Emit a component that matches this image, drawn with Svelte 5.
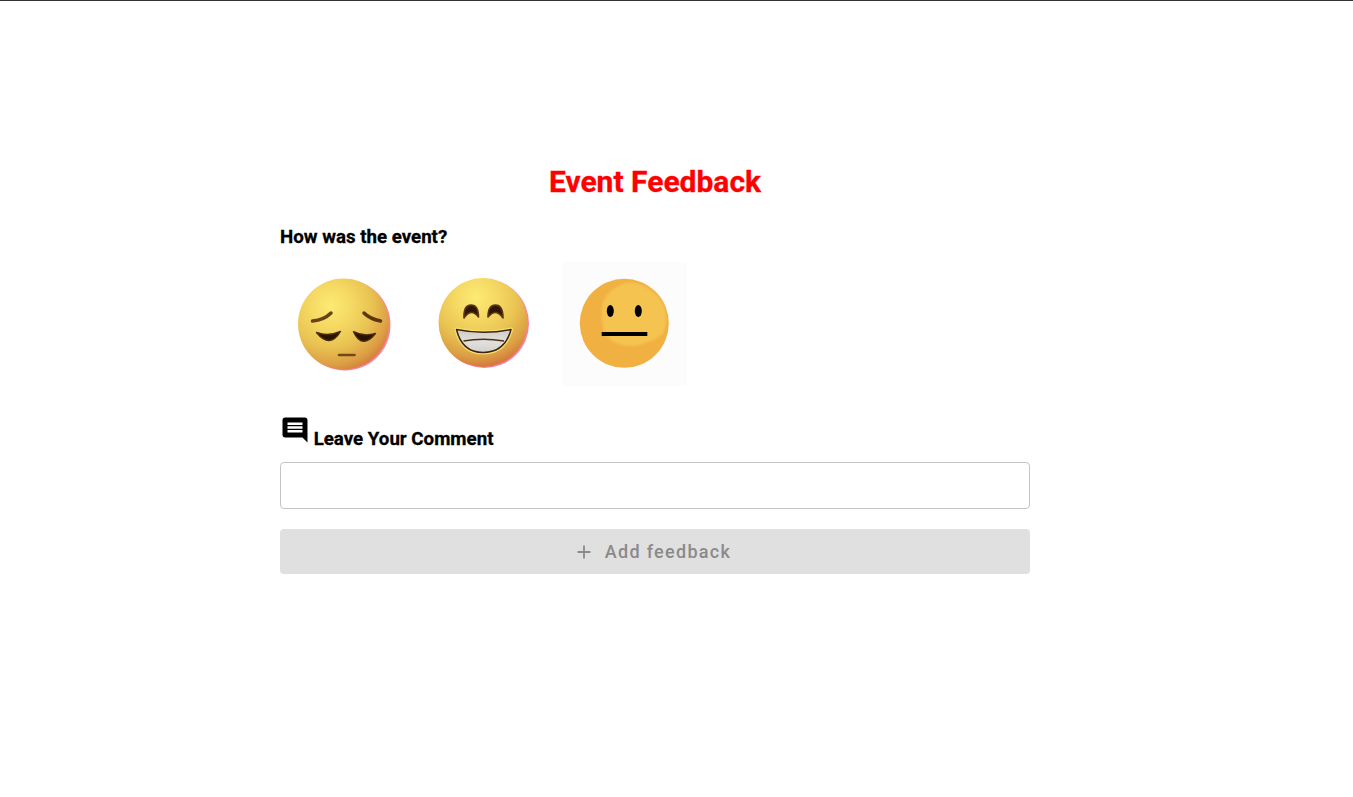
<script lang="ts">
    let comment = $state('');
</script>

<div class="topbar"></div>

<main class="page">
    <h1>Event Feedback</h1>

    <h3 class="question">How was the event?</h3>
    <div class="emojis">
        <button class="emoji" aria-label="Sad">
            <svg width="125" height="124" viewBox="0 0 125 124">
                <defs>
                    <radialGradient id="sadFace" cx="0.36" cy="0.3" r="0.76">
                        <stop offset="0" stop-color="#fceb74" />
                        <stop offset="0.3" stop-color="#f5d963" />
                        <stop offset="0.6" stop-color="#e9c352" />
                        <stop offset="0.85" stop-color="#dc9f44" />
                        <stop offset="1" stop-color="#d4793c" />
                    </radialGradient>
                </defs>
                <circle cx="65" cy="63" r="45.500" fill="#fb7fa0" />
                <circle cx="63.500" cy="62" r="45.500" fill="url(#sadFace)" />
                <path d="M32.500 59 Q44 58 51 51" fill="none" stroke="#6b4217" stroke-width="3.500" stroke-linecap="round" />
                <path d="M84 51 Q90 57 100.500 59" fill="none" stroke="#5c3612" stroke-width="3.500" stroke-linecap="round" />
                <path d="M36.500 70.500 Q48 75 60.500 69.500 Q50 87 36.500 70.500Z" fill="#2a1203" stroke="#4a2a0c" stroke-width="1.400" stroke-linejoin="round" />
                <path d="M73.500 69.700 Q84 75 95.500 71.500 Q82 88 73.500 69.700Z" fill="#2a1203" stroke="#4a2a0c" stroke-width="1.400" stroke-linejoin="round" />
                <path d="M59 93 H74.500" fill="none" stroke="#75481a" stroke-width="2.600" stroke-linecap="round" />
            </svg>
        </button>

        <button class="emoji" aria-label="Happy">
            <svg width="125" height="124" viewBox="0 0 125 124">
                <defs>
                    <radialGradient id="happyFace" cx="0.42" cy="0.22" r="0.78">
                        <stop offset="0" stop-color="#fceb74" />
                        <stop offset="0.3" stop-color="#f5d963" />
                        <stop offset="0.6" stop-color="#e9c352" />
                        <stop offset="0.85" stop-color="#dc9f44" />
                        <stop offset="1" stop-color="#d4793c" />
                    </radialGradient>
                    <linearGradient id="teeth" x1="0" y1="0" x2="0" y2="1">
                        <stop offset="0" stop-color="#cfccc6" />
                        <stop offset="0.5" stop-color="#e2e0dc" />
                        <stop offset="1" stop-color="#d4d2ce" />
                    </linearGradient>
                </defs>
                <circle cx="63.500" cy="61.500" r="44.500" fill="#fb7fa0" />
                <circle cx="62" cy="60.500" r="44.500" fill="url(#happyFace)" />
                <path d="M43 56 Q42.500 43 50 43 Q57.500 43 57.500 55 Q50 45.500 43 56Z" fill="#2f1604" stroke="#5a3512" stroke-width="1.600" stroke-linejoin="round" />
                <path d="M67 55 Q67 43 74.500 43 Q82 43 82 56 Q75 45.500 67 55Z" fill="#2f1604" stroke="#5a3512" stroke-width="1.600" stroke-linejoin="round" />
                <path d="M35.500 67.500 Q62 73 90 67.500 Q84 90.500 62 90.500 Q41 90.500 35.500 67.500Z" fill="url(#teeth)" stroke="#f8df6c" stroke-width="4" stroke-linejoin="round" />
                <path d="M35.500 67.500 Q62 73 90 67.500 Q84 90.500 62 90.500 Q41 90.500 35.500 67.500Z" fill="url(#teeth)" stroke="#3a2510" stroke-width="1.500" stroke-linejoin="round" />
                <path d="M42.500 79 Q62 75.500 83 79" fill="none" stroke="#4a3218" stroke-width="1.500" />
            </svg>
        </button>

        <button class="emoji neutral" aria-label="Neutral">
            <svg width="125" height="124" viewBox="0 0 125 124">
                <defs>
                    <filter id="soft" x="-10%" y="-10%" width="120%" height="120%">
                        <feGaussianBlur stdDeviation="1" />
                    </filter>
                </defs>
                <circle cx="62.300" cy="61.300" r="44.500" fill="#f1b042" />
                <path d="M40 58 Q38 36 50 28 Q60 20 70 20.500 Q92 24 102 44 Q107 58 101 72 Q88 82 70 84 Q50 84 42 70Z" fill="#f5c350" filter="url(#soft)" />
                <ellipse cx="48.300" cy="49" rx="3.500" ry="6" fill="#000" />
                <ellipse cx="76.300" cy="49" rx="3.500" ry="6" fill="#000" />
                <rect x="39.700" y="70" width="45.600" height="4" fill="#000" />
            </svg>
        </button>
    </div>

    <h3 class="comment-label">
        <svg width="30" height="30" viewBox="0 0 24 24" aria-hidden="true">
            <path d="M21.990 4c0-1.100-.890-2-1.990-2H4c-1.100 0-2 .900-2 2v12c0 1.100.900 2 2 2h14l4 4-.010-18zM18 14H6v-2h12v2zm0-3H6V9h12v2zm0-3H6V6h12v2z" fill="#000" />
        </svg>
        Leave Your Comment
    </h3>

    <input class="comment" type="text" bind:value={comment} />

    <button class="submit" disabled>
        <svg width="22" height="22" viewBox="0 0 24 24" aria-hidden="true">
            <path d="M19 13h-6v6h-2v-6H5v-2h6V5h2v6h6v2z" fill="currentColor" />
        </svg>
        <span>Add feedback</span>
    </button>
</main>

<style>
    :global(body) {
        background: #fff;
        font-family: Roboto, "Liberation Sans", sans-serif;
    }
    .topbar {
        height: 1px;
        background: #333;
    }
    .page {
        width: 750px;
        margin-left: 280px;
        padding-top: 160px;
    }
    h1 {
        margin: 0;
        text-align: center;
        color: #f00;
        font-size: 30px;
        line-height: 41px;
        font-weight: 700;
        -webkit-text-stroke: 0.300px #f00;
    }
    .question {
        margin: 23px 0 0;
        font-size: 18.720px;
        line-height: 24px;
        font-weight: 700;
        color: #000;
        -webkit-text-stroke: 0.300px #000;
    }
    .emojis {
        display: flex;
        gap: 16px;
        margin-top: 13px;
    }
    .emoji {
        width: 125px;
        height: 124px;
        padding: 0;
        border: none;
        background: #fff;
    }
    .emoji svg {
        display: block;
    }
    .neutral {
        background: #fcfcfc;
    }
    .comment-label {
        margin: 29px 0 0;
        font-size: 18.720px;
        font-weight: 700;
        color: #000;
        -webkit-text-stroke: 0.300px #000;
    }
    .comment-label svg {
        margin-right: -1px;
    }
    .comment {
        display: block;
        box-sizing: border-box;
        width: 100%;
        height: 47px;
        margin-top: 12px;
        border: 1px solid #c4c4c4;
        border-radius: 4px;
        outline: none;
    }
    .submit {
        display: flex;
        align-items: center;
        justify-content: center;
        gap: 10px;
        width: 100%;
        height: 45px;
        margin-top: 20px;
        padding: 0 6px 0 0;
        border: none;
        border-radius: 4px;
        background: #e0e0e0;
        color: #8a8a8a;
        font-family: Roboto, sans-serif;
        font-size: 18px;
        font-weight: 500;
        letter-spacing: 1.300px;
    }
</style>
